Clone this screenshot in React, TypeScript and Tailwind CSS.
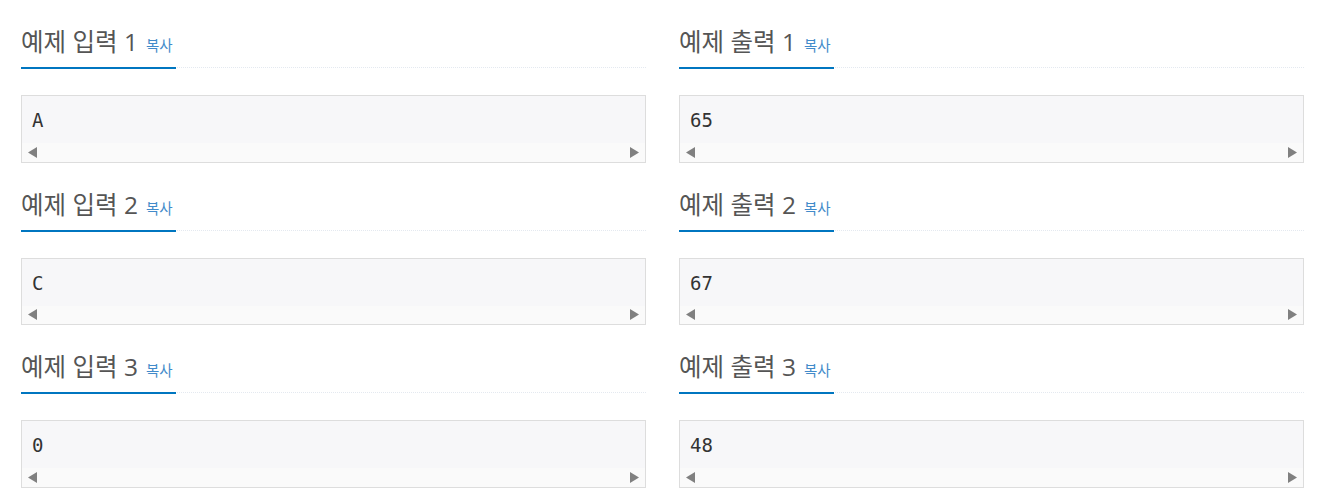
import React from "react"

type Sample = { label: string; value: string }

const rows: [Sample, Sample][] = [
  [
    { label: "예제 입력 1", value: "A" },
    { label: "예제 출력 1", value: "65" },
  ],
  [
    { label: "예제 입력 2", value: "C" },
    { label: "예제 출력 2", value: "67" },
  ],
  [
    { label: "예제 입력 3", value: "0" },
    { label: "예제 출력 3", value: "48" },
  ],
]

function SampleBox({ label, value }: Sample) {
  return (
    <section className="mt-[29px]">
      <div className="border-b border-dotted border-[#e4e9f0]">
        <h2
          className="-mb-[2px] inline-block h-[40px] border-b-2 border-[#0076c0] pb-[13px] text-[24.5px] leading-[25px] text-[#555]"
          style={{ fontFamily: '"Open Sans", "Noto Sans CJK KR", sans-serif' }}
        >
          {label}
          <button className="ml-[8px] mr-[3px] text-[14.5px] leading-[25px] text-[#428bca]">
            복사
          </button>
        </h2>
      </div>
      <div className="mt-[27px] border border-[#dddddd] bg-[#f7f7f9]">
        <pre
          className="h-[47px] overflow-hidden px-[10px] pt-[12px] text-[19px] leading-[24px] text-[#333]"
          style={{ fontFamily: '"DejaVu Sans Mono", monospace' }}
        >
          {value}
        </pre>
        <div className="flex h-[18.5px] items-center justify-between bg-[#fafafa] px-[6px]">
          <svg width="9" height="11" viewBox="0 0 9 11">
            <polygon points="9,0 9,11 0,5.5" fill="#808080" />
          </svg>
          <svg width="9" height="11" viewBox="0 0 9 11">
            <polygon points="0,0 0,11 9,5.5" fill="#808080" />
          </svg>
        </div>
      </div>
    </section>
  )
}

export default function App() {
  return (
    <div className="min-h-screen bg-white px-[21px]">
      <div className="grid grid-cols-2 gap-x-[33px]">
        {rows.map(([input, output]) => (
          <React.Fragment key={input.label}>
            <SampleBox {...input} />
            <SampleBox {...output} />
          </React.Fragment>
        ))}
      </div>
    </div>
  )
}
